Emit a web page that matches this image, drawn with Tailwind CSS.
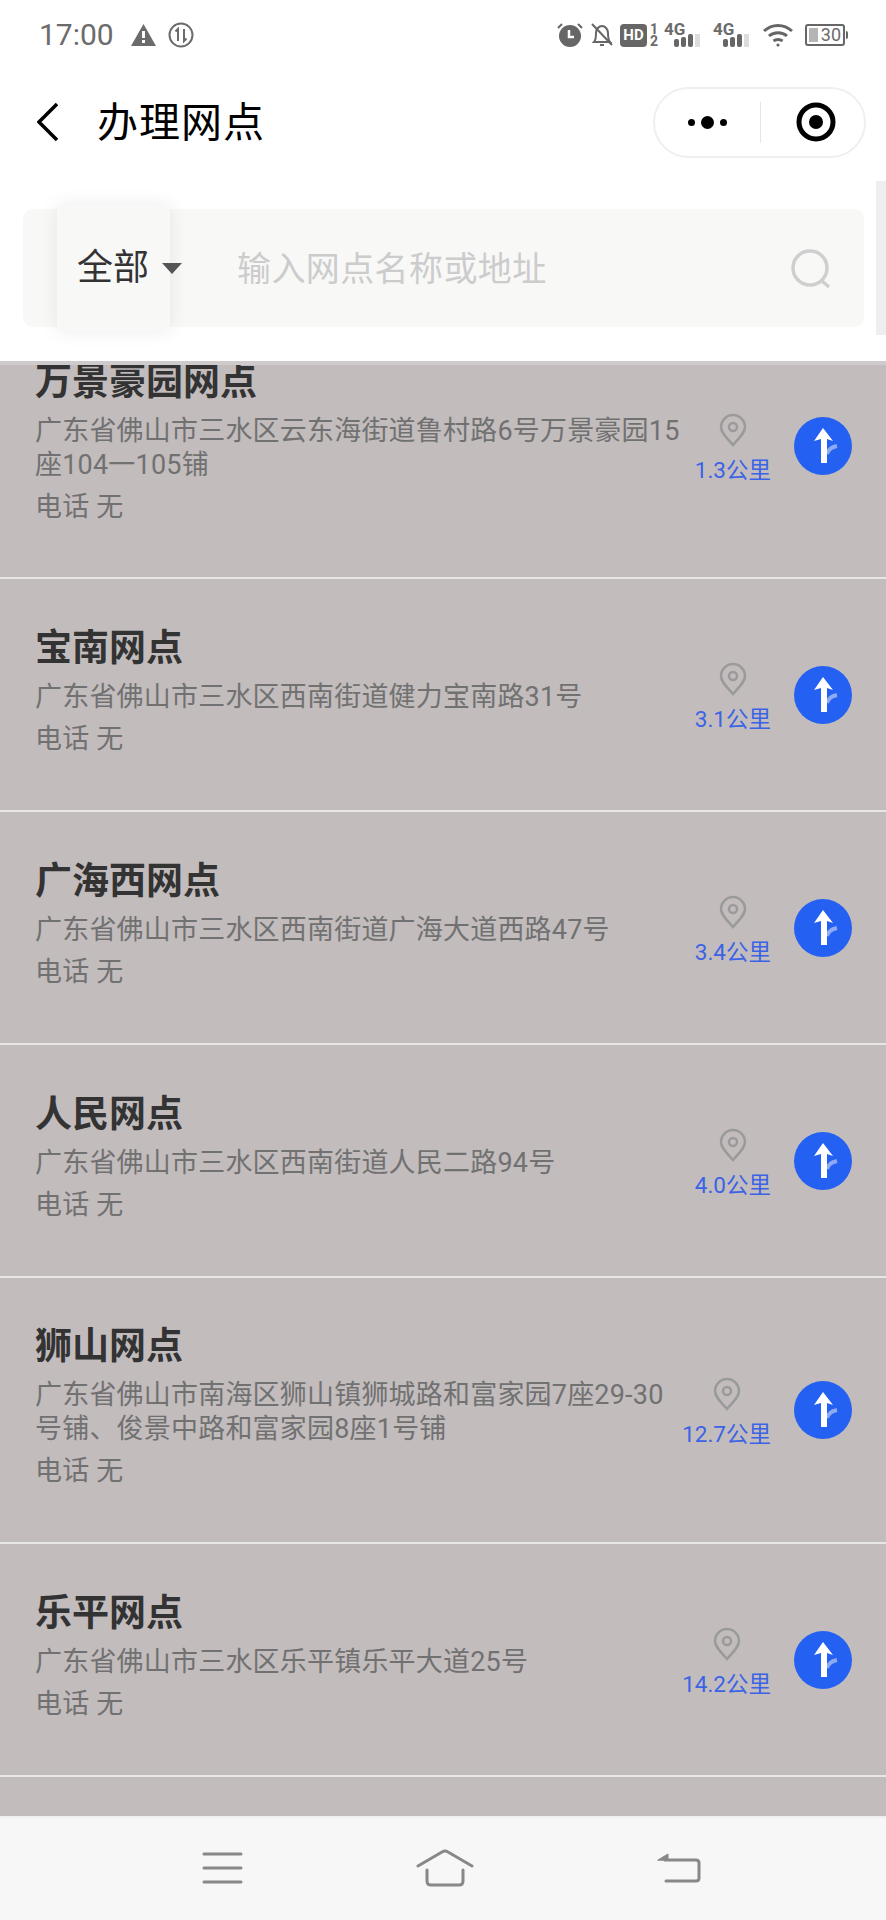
<!DOCTYPE html>
<html lang="zh-CN">
<head>
  <meta charset="UTF-8" />
  <meta name="viewport" content="width=device-width, initial-scale=1.0" />
  <title>办理网点</title>
  <script src="https://cdn.jsdelivr.net/npm/@tailwindcss/browser@4"></script>
</head>
<body class="bg-white">
<div class="relative w-[886px] h-[1920px] overflow-hidden flex flex-col font-['Roboto','Noto_Sans_CJK_SC',sans-serif]">

  <!-- status bar -->
  <div class="h-[70px] shrink-0 flex items-center pl-[39px] pr-[41px] text-[#6b6b6b]">
    <span class="text-[30px] leading-none w-[92px]">17:00</span>
    <svg class="w-[25px] h-[22px]" viewBox="0 0 25 22"><path d="M12.5 0 25 22H0z" fill="#6b6b6b"/><rect x="11" y="7" width="3" height="7" fill="#fff"/><rect x="11" y="16" width="3" height="3" fill="#fff"/></svg>
    <svg class="w-[26px] h-[26px] ml-[12px]" viewBox="0 0 26 26" fill="none" stroke="#6b6b6b"><circle cx="13" cy="13" r="11.5" stroke-width="2"/><path d="M10 19V7L7.5 9.5M16 7v12l2.5-2.5" stroke-width="2"/></svg>

    <div class="ml-auto flex items-center">
      <svg class="w-[26px] h-[26px]" viewBox="0 0 26 26"><circle cx="13" cy="14" r="11" fill="#666"/><path d="M12 8v7h5" fill="none" stroke="#fff" stroke-width="2.5"/><path d="M1 6l4-4M25 6l-4-4" stroke="#666" stroke-width="2"/></svg>
      <svg class="w-[24px] h-[26px] ml-[7px]" viewBox="0 0 24 26" fill="none" stroke="#666" stroke-width="2"><path d="M4 20c2-2 2-5 2-9s3-7 6-7 6 3 6 7 0 7 2 9z"/><path d="M10 23h4M2 2l20 21"/></svg>
      <span class="ml-[6px] w-[27px] h-[23px] rounded-[4px] bg-[#666] text-white text-[15px] leading-[23px] font-bold text-center">HD</span>
      <span class="ml-[2px] w-[10px] break-all text-[14px] leading-[12px] font-bold text-center">12</span>
      <span class="ml-[5px] relative w-[40px] h-[26px]">
        <span class="absolute left-0 top-0 text-[17px] leading-[14px] font-bold">4G</span>
        <svg class="absolute left-[10px] top-[12px] w-[30px] h-[14px]" viewBox="0 0 30 14"><rect x="0" y="5" width="5" height="8" rx="2" fill="#666"/><rect x="7" y="3" width="5" height="10" rx="2" fill="#666"/><rect x="14" y="0" width="5" height="13" rx="2" fill="#666"/><rect x="21" y="0" width="5" height="13" fill="#ddd"/></svg>
      </span>
      <span class="ml-[9px] relative w-[40px] h-[26px]">
        <span class="absolute left-0 top-0 text-[17px] leading-[14px] font-bold">4G</span>
        <svg class="absolute left-[10px] top-[12px] w-[30px] h-[14px]" viewBox="0 0 30 14"><rect x="0" y="5" width="5" height="8" rx="2" fill="#666"/><rect x="7" y="3" width="5" height="10" rx="2" fill="#666"/><rect x="14" y="0" width="5" height="13" rx="2" fill="#666"/><rect x="21" y="0" width="5" height="13" fill="#ddd"/></svg>
      </span>
      <svg class="w-[30px] h-[24px] ml-[10px]" viewBox="0 0 30 24" fill="none" stroke="#666" stroke-width="3"><path d="M1 8c8-7.500 20-7.500 28 0M6 13c5-4.500 13-4.500 18 0M10.500 18c2.500-2 6.500-2 9 0"/><circle cx="15" cy="22" r="1.600" fill="#666" stroke="none"/></svg>
      <span class="ml-[12px] relative w-[40px] h-[22px] border-2 border-[#666] rounded-[3px] text-[18px] leading-[18px] text-right pr-[2px]">
        <span class="absolute left-[2px] top-[2px] w-[9px] h-[14px] bg-[#b5b5b5]"></span>
        <span class="relative">30</span>
        <span class="absolute -right-[5px] top-[5px] w-[2px] h-[8px] bg-[#666] rounded-r"></span>
      </span>
    </div>
  </div>

  <!-- title bar -->
  <div class="h-[104px] shrink-0 flex items-center pl-[37px] pr-[20px]">
    <svg class="w-[21px] h-[40px]" viewBox="0 0 21 40" fill="none" stroke="#000" stroke-width="3.500"><path d="M20 2 2 20l18 18"/></svg>
    <h1 class="ml-[39px] mt-[2px] text-[41px] leading-none tracking-[1px] text-black">办理网点</h1>
    <div class="ml-auto w-[213px] h-[71px] rounded-full border-2 border-[#efefef] flex items-center">
      <div class="w-[105px] flex items-center justify-center gap-[6px]">
        <span class="w-[7px] h-[7px] rounded-full bg-black"></span>
        <span class="w-[13px] h-[13px] rounded-full bg-black"></span>
        <span class="w-[7px] h-[7px] rounded-full bg-black"></span>
      </div>
      <div class="w-px h-[41px] bg-[#e6e6e6]"></div>
      <div class="flex-1 flex justify-center pl-[6px]">
        <svg class="w-[40px] h-[40px]" viewBox="0 0 40 40"><circle cx="20" cy="20" r="17" fill="none" stroke="#000" stroke-width="5"/><circle cx="20" cy="20" r="7" fill="#000"/></svg>
      </div>
    </div>
  </div>

  <!-- search -->
  <div class="h-[187px] shrink-0 pt-[35px] pl-[23px]">
    <div class="w-[841px] h-[118px] rounded-[10px] bg-[#f8f8f7] flex items-center pl-[34px] pr-[31px]">
      <div class="w-[113px] h-[126px] shrink-0 bg-[#f8f8f7] shadow-[0_0_18px_rgba(0,0,0,0.08)] flex items-center pl-[20px] whitespace-nowrap">
        <span class="text-[36px] leading-none text-[#333] shrink-0">全部</span>
        <span class="ml-[13px] mt-[1px] w-0 h-0 shrink-0 border-x-[10px] border-x-transparent border-t-[11px] border-t-[#555]"></span>
      </div>
      <span class="ml-[67px] mt-[1px] text-[34px] tracking-[0.4px] leading-none text-[#cccccc]">输入网点名称或地址</span>
      <svg class="ml-auto mt-[3px] w-[42px] h-[42px]" viewBox="0 0 42 42" fill="none" stroke="#cfcfcf" stroke-width="3.500"><circle cx="19" cy="19" r="17"/><path d="M31 32l7 6"/></svg>
    </div>
  </div>

  <!-- list -->
  <div class="flex-1 min-h-0 overflow-hidden bg-[#c2bcbd] border-t-[4px] border-t-[#cfcbcc]">
    <div class="-mt-[51px] text-[27px] tracking-[0.2px] leading-[34px] text-[#717171]">

      <div class="flex items-center h-[265px] border-b-2 border-b-[#e8e6e6] pl-[35px] pr-[34px]">
        <div class="w-[650px] pb-[10px]">
          <div class="text-[37px] tracking-normal leading-[50px] font-bold text-[#333]">万景豪园网点</div>
          <div class="mt-[6px]">广东省佛山市三水区云东海街道鲁村路6号万景豪园15座104一105铺</div>
          <div class="mt-[8px]">电话 无</div>
        </div>
        <div class="ml-auto pt-[6px] flex flex-col items-center whitespace-nowrap">
          <svg class="w-[28px] h-[34px]" viewBox="0 0 28 34" fill="none" stroke="#9a9a9a" stroke-width="2.500"><path d="M14 32C8 25 2 20 2 14a12 12 0 0 1 24 0c0 6-6 11-12 18z"/><circle cx="14" cy="14" r="4"/></svg>
          <span class="mt-[8px] text-[22.500px] tracking-normal leading-[30px] text-[#3b63e6]">1.3公里</span>
        </div>
        <svg class="ml-[23px] w-[58px] h-[58px] shrink-0" viewBox="0 0 58 58"><circle cx="29" cy="29" r="29" fill="#2460f2"/><path d="M33 37c1-4 5-7 10-8" fill="none" stroke="#8fa9f3" stroke-width="4"/><path d="M29 11l10 13-6-2v24h-6V22l-7 2z" fill="#fff"/></svg>
      </div>

      <div class="flex items-center h-[233px] border-b-2 border-b-[#e8e6e6] pl-[35px] pr-[34px]">
        <div class="w-[650px] pb-[10px]">
          <div class="text-[37px] tracking-normal leading-[50px] font-bold text-[#333]">宝南网点</div>
          <div class="mt-[6px]">广东省佛山市三水区西南街道健力宝南路31号</div>
          <div class="mt-[8px]">电话 无</div>
        </div>
        <div class="ml-auto pt-[6px] flex flex-col items-center whitespace-nowrap">
          <svg class="w-[28px] h-[34px]" viewBox="0 0 28 34" fill="none" stroke="#9a9a9a" stroke-width="2.500"><path d="M14 32C8 25 2 20 2 14a12 12 0 0 1 24 0c0 6-6 11-12 18z"/><circle cx="14" cy="14" r="4"/></svg>
          <span class="mt-[8px] text-[22.500px] tracking-normal leading-[30px] text-[#3b63e6]">3.1公里</span>
        </div>
        <svg class="ml-[23px] w-[58px] h-[58px] shrink-0" viewBox="0 0 58 58"><circle cx="29" cy="29" r="29" fill="#2460f2"/><path d="M33 37c1-4 5-7 10-8" fill="none" stroke="#8fa9f3" stroke-width="4"/><path d="M29 11l10 13-6-2v24h-6V22l-7 2z" fill="#fff"/></svg>
      </div>

      <div class="flex items-center h-[233px] border-b-2 border-b-[#e8e6e6] pl-[35px] pr-[34px]">
        <div class="w-[650px] pb-[10px]">
          <div class="text-[37px] tracking-normal leading-[50px] font-bold text-[#333]">广海西网点</div>
          <div class="mt-[6px]">广东省佛山市三水区西南街道广海大道西路47号</div>
          <div class="mt-[8px]">电话 无</div>
        </div>
        <div class="ml-auto pt-[6px] flex flex-col items-center whitespace-nowrap">
          <svg class="w-[28px] h-[34px]" viewBox="0 0 28 34" fill="none" stroke="#9a9a9a" stroke-width="2.500"><path d="M14 32C8 25 2 20 2 14a12 12 0 0 1 24 0c0 6-6 11-12 18z"/><circle cx="14" cy="14" r="4"/></svg>
          <span class="mt-[8px] text-[22.500px] tracking-normal leading-[30px] text-[#3b63e6]">3.4公里</span>
        </div>
        <svg class="ml-[23px] w-[58px] h-[58px] shrink-0" viewBox="0 0 58 58"><circle cx="29" cy="29" r="29" fill="#2460f2"/><path d="M33 37c1-4 5-7 10-8" fill="none" stroke="#8fa9f3" stroke-width="4"/><path d="M29 11l10 13-6-2v24h-6V22l-7 2z" fill="#fff"/></svg>
      </div>

      <div class="flex items-center h-[233px] border-b-2 border-b-[#e8e6e6] pl-[35px] pr-[34px]">
        <div class="w-[650px] pb-[10px]">
          <div class="text-[37px] tracking-normal leading-[50px] font-bold text-[#333]">人民网点</div>
          <div class="mt-[6px]">广东省佛山市三水区西南街道人民二路94号</div>
          <div class="mt-[8px]">电话 无</div>
        </div>
        <div class="ml-auto pt-[6px] flex flex-col items-center whitespace-nowrap">
          <svg class="w-[28px] h-[34px]" viewBox="0 0 28 34" fill="none" stroke="#9a9a9a" stroke-width="2.500"><path d="M14 32C8 25 2 20 2 14a12 12 0 0 1 24 0c0 6-6 11-12 18z"/><circle cx="14" cy="14" r="4"/></svg>
          <span class="mt-[8px] text-[22.500px] tracking-normal leading-[30px] text-[#3b63e6]">4.0公里</span>
        </div>
        <svg class="ml-[23px] w-[58px] h-[58px] shrink-0" viewBox="0 0 58 58"><circle cx="29" cy="29" r="29" fill="#2460f2"/><path d="M33 37c1-4 5-7 10-8" fill="none" stroke="#8fa9f3" stroke-width="4"/><path d="M29 11l10 13-6-2v24h-6V22l-7 2z" fill="#fff"/></svg>
      </div>

      <div class="flex items-center h-[266px] border-b-2 border-b-[#e8e6e6] pl-[35px] pr-[34px]">
        <div class="w-[650px] pb-[10px]">
          <div class="text-[37px] tracking-normal leading-[50px] font-bold text-[#333]">狮山网点</div>
          <div class="mt-[6px]">广东省佛山市南海区狮山镇狮城路和富家园7座29-30号铺、俊景中路和富家园8座1号铺</div>
          <div class="mt-[8px]">电话 无</div>
        </div>
        <div class="ml-auto pt-[6px] flex flex-col items-center whitespace-nowrap">
          <svg class="w-[28px] h-[34px]" viewBox="0 0 28 34" fill="none" stroke="#9a9a9a" stroke-width="2.500"><path d="M14 32C8 25 2 20 2 14a12 12 0 0 1 24 0c0 6-6 11-12 18z"/><circle cx="14" cy="14" r="4"/></svg>
          <span class="mt-[8px] text-[22.500px] tracking-normal leading-[30px] text-[#3b63e6]">12.7公里</span>
        </div>
        <svg class="ml-[23px] w-[58px] h-[58px] shrink-0" viewBox="0 0 58 58"><circle cx="29" cy="29" r="29" fill="#2460f2"/><path d="M33 37c1-4 5-7 10-8" fill="none" stroke="#8fa9f3" stroke-width="4"/><path d="M29 11l10 13-6-2v24h-6V22l-7 2z" fill="#fff"/></svg>
      </div>

      <div class="flex items-center h-[233px] border-b-2 border-b-[#e8e6e6] pl-[35px] pr-[34px]">
        <div class="w-[650px] pb-[10px]">
          <div class="text-[37px] tracking-normal leading-[50px] font-bold text-[#333]">乐平网点</div>
          <div class="mt-[6px]">广东省佛山市三水区乐平镇乐平大道25号</div>
          <div class="mt-[8px]">电话 无</div>
        </div>
        <div class="ml-auto pt-[6px] flex flex-col items-center whitespace-nowrap">
          <svg class="w-[28px] h-[34px]" viewBox="0 0 28 34" fill="none" stroke="#9a9a9a" stroke-width="2.500"><path d="M14 32C8 25 2 20 2 14a12 12 0 0 1 24 0c0 6-6 11-12 18z"/><circle cx="14" cy="14" r="4"/></svg>
          <span class="mt-[8px] text-[22.500px] tracking-normal leading-[30px] text-[#3b63e6]">14.2公里</span>
        </div>
        <svg class="ml-[23px] w-[58px] h-[58px] shrink-0" viewBox="0 0 58 58"><circle cx="29" cy="29" r="29" fill="#2460f2"/><path d="M33 37c1-4 5-7 10-8" fill="none" stroke="#8fa9f3" stroke-width="4"/><path d="M29 11l10 13-6-2v24h-6V22l-7 2z" fill="#fff"/></svg>
      </div>
    </div>
  </div>

  <!-- android nav -->
  <div class="h-[104px] shrink-0 bg-[#f7f7f7] border-t-[2px] border-t-[#f0eeee] flex items-center pb-[3px]">
    <svg class="ml-[202px] w-[41px] h-[32px]" viewBox="0 0 41 32" stroke="#888" stroke-width="3" stroke-linecap="round"><path d="M2 2h37M2 16h37M2 30h37"/></svg>
    <svg class="ml-[173px] w-[58px] h-[38px]" viewBox="0 0 58 38" fill="none" stroke="#888" stroke-width="3" stroke-linecap="round" stroke-linejoin="round"><path d="M2 17 26 3q3-2 6 0l24 14"/><path d="M11 21v11q0 4 4 4h28q4 0 4-4V21"/></svg>
    <svg class="ml-[183px] w-[44px] h-[30px]" viewBox="0 0 44 30" fill="none" stroke="#888" stroke-width="3" stroke-linecap="round" stroke-linejoin="round"><path d="M8 7h31q3 0 3 3v15q0 3-3 3H9"/><path d="M1 7l10-6v6z" fill="#888" stroke-width="1"/></svg>
  </div>

  <!-- scroll indicator -->
  <div class="absolute left-[876px] top-[181px] w-[10px] h-[154px] bg-[#eeeeee]"></div>
</div>
</body>
</html>
